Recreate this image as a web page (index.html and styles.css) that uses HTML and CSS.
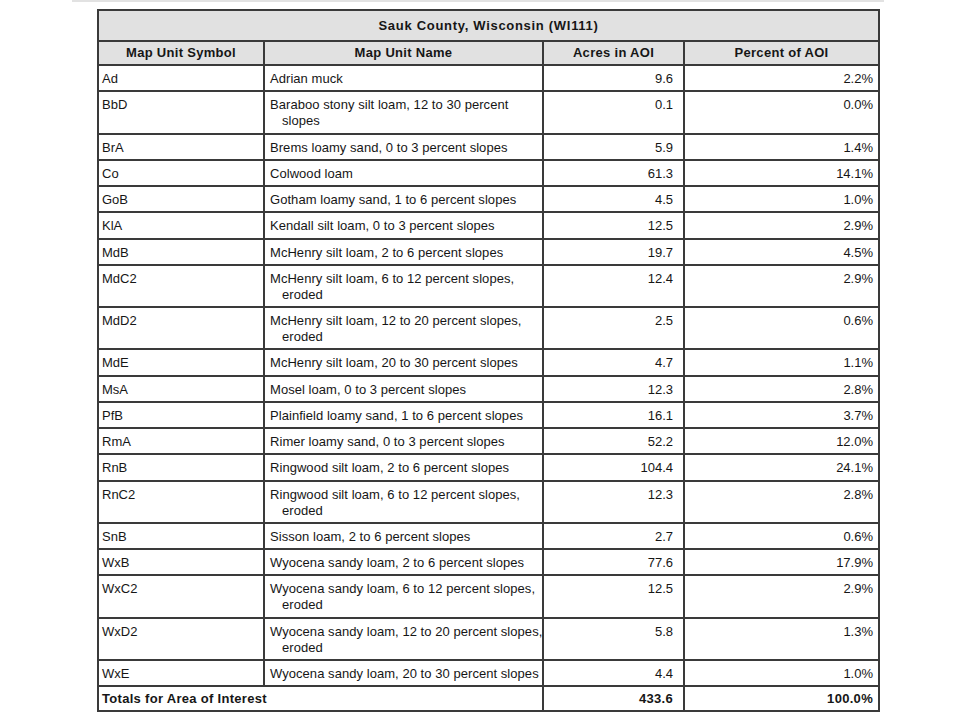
FILE: index.html
```html
<!DOCTYPE html>
<html lang="en">
<head>
<meta charset="utf-8">
<title>Sauk County, Wisconsin (WI111)</title>
<link rel="stylesheet" href="styles.css">
</head>
<body>
<div class="topbar"></div>
<table class="soil">
  <colgroup>
    <col class="c-sym"><col class="c-name"><col class="c-acres"><col class="c-pct">
  </colgroup>
  <thead>
    <tr class="title"><th colspan="4">Sauk County, Wisconsin (WI111)</th></tr>
    <tr class="head"><th>Map Unit Symbol</th><th>Map Unit Name</th><th>Acres in AOI</th><th>Percent of AOI</th></tr>
  </thead>
  <tbody>
    <tr><td class="sym">Ad</td><td class="name">Adrian muck</td><td class="acres">9.6</td><td class="pct">2.2%</td></tr>
    <tr><td class="sym">BbD</td><td class="name">Baraboo stony silt loam, 12 to 30 percent<br>slopes</td><td class="acres">0.1</td><td class="pct">0.0%</td></tr>
    <tr><td class="sym">BrA</td><td class="name">Brems loamy sand, 0 to 3 percent slopes</td><td class="acres">5.9</td><td class="pct">1.4%</td></tr>
    <tr><td class="sym">Co</td><td class="name">Colwood loam</td><td class="acres">61.3</td><td class="pct">14.1%</td></tr>
    <tr><td class="sym">GoB</td><td class="name">Gotham loamy sand, 1 to 6 percent slopes</td><td class="acres">4.5</td><td class="pct">1.0%</td></tr>
    <tr><td class="sym">KlA</td><td class="name">Kendall silt loam, 0 to 3 percent slopes</td><td class="acres">12.5</td><td class="pct">2.9%</td></tr>
    <tr><td class="sym">MdB</td><td class="name">McHenry silt loam, 2 to 6 percent slopes</td><td class="acres">19.7</td><td class="pct">4.5%</td></tr>
    <tr><td class="sym">MdC2</td><td class="name">McHenry silt loam, 6 to 12 percent slopes,<br>eroded</td><td class="acres">12.4</td><td class="pct">2.9%</td></tr>
    <tr><td class="sym">MdD2</td><td class="name">McHenry silt loam, 12 to 20 percent slopes,<br>eroded</td><td class="acres">2.5</td><td class="pct">0.6%</td></tr>
    <tr><td class="sym">MdE</td><td class="name">McHenry silt loam, 20 to 30 percent slopes</td><td class="acres">4.7</td><td class="pct">1.1%</td></tr>
    <tr><td class="sym">MsA</td><td class="name">Mosel loam, 0 to 3 percent slopes</td><td class="acres">12.3</td><td class="pct">2.8%</td></tr>
    <tr><td class="sym">PfB</td><td class="name">Plainfield loamy sand, 1 to 6 percent slopes</td><td class="acres">16.1</td><td class="pct">3.7%</td></tr>
    <tr><td class="sym">RmA</td><td class="name">Rimer loamy sand, 0 to 3 percent slopes</td><td class="acres">52.2</td><td class="pct">12.0%</td></tr>
    <tr><td class="sym">RnB</td><td class="name">Ringwood silt loam, 2 to 6 percent slopes</td><td class="acres">104.4</td><td class="pct">24.1%</td></tr>
    <tr><td class="sym">RnC2</td><td class="name">Ringwood silt loam, 6 to 12 percent slopes,<br>eroded</td><td class="acres">12.3</td><td class="pct">2.8%</td></tr>
    <tr><td class="sym">SnB</td><td class="name">Sisson loam, 2 to 6 percent slopes</td><td class="acres">2.7</td><td class="pct">0.6%</td></tr>
    <tr><td class="sym">WxB</td><td class="name">Wyocena sandy loam, 2 to 6 percent slopes</td><td class="acres">77.6</td><td class="pct">17.9%</td></tr>
    <tr><td class="sym">WxC2</td><td class="name">Wyocena sandy loam, 6 to 12 percent slopes,<br>eroded</td><td class="acres">12.5</td><td class="pct">2.9%</td></tr>
    <tr><td class="sym">WxD2</td><td class="name">Wyocena sandy loam, 12 to 20 percent slopes,<br>eroded</td><td class="acres">5.8</td><td class="pct">1.3%</td></tr>
    <tr><td class="sym">WxE</td><td class="name">Wyocena sandy loam, 20 to 30 percent slopes</td><td class="acres">4.4</td><td class="pct">1.0%</td></tr>
  </tbody>
  <tfoot>
    <tr class="total"><td class="sym" colspan="2">Totals for Area of Interest</td><td class="acres">433.6</td><td class="pct">100.0%</td></tr>
  </tfoot>
</table>
</body>
</html>
```
FILE: styles.css
```css
html, body {
  margin: 0;
  padding: 0;
  background: #ffffff;
}

body {
  font-family: "Liberation Sans", Arial, sans-serif;
  font-size: 13px;
  color: #161616;
}

.topbar {
  height: 2px;
  width: 812px;
  margin-left: 72px;
  background: #e2e2e2;
}

.soil {
  margin-top: 7px;
  margin-left: 97px;
  width: 783px;
  table-layout: fixed;
  border-collapse: separate;
  border-spacing: 0;
  border-top: 2px solid #3a3a3a;
  border-left: 2px solid #3a3a3a;
}

.c-sym { width: 166px; }
.c-name { width: 279px; }
.c-acres { width: 141px; }
.c-pct { width: 195px; }

.soil th,
.soil td {
  border-right: 2px solid #3a3a3a;
  border-bottom: 2px solid #3a3a3a;
  line-height: 16px;
  vertical-align: top;
  padding: 5px 0 3.25px 0;
  white-space: nowrap;
}

.soil th {
  background: #e1e1e1;
  font-weight: bold;
  text-align: center;
  vertical-align: middle;
  letter-spacing: 0.3px;
}

.title th {
  height: 29px;
  padding: 0;
  font-size: 13px;
  letter-spacing: 0.7px;
}

.head th {
  height: 22px;
  padding: 0;
}

.soil td.sym {
  padding-left: 3px;
}

.soil td.name {
  padding-left: 17px;
  padding-right: 2px;
  text-indent: -12px;
  letter-spacing: 0.05px;
}

.soil td.acres {
  text-align: right;
  padding-right: 10px;
}

.soil td.pct {
  text-align: right;
  padding-right: 5px;
}

.total td {
  font-weight: bold;
  vertical-align: middle;
  padding-top: 4px;
  padding-bottom: 3px;
  letter-spacing: 0.3px;
}
```
